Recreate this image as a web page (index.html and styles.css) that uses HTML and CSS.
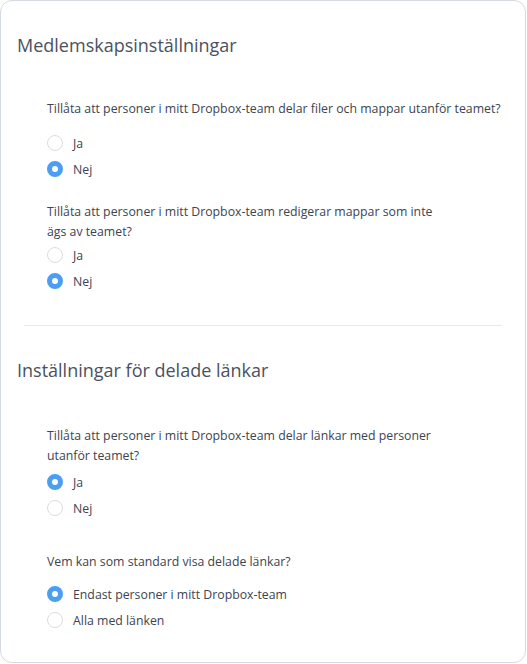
FILE: index.html
```html
<!DOCTYPE html>
<html lang="sv">
<head>
    <meta charset="UTF-8">
    <title>Teaminställningar</title>
    <link rel="stylesheet" href="styles.css">
</head>
<body>
<div class="card">
    <section class="section">
        <h2 class="section-title">Medlemskapsinställningar</h2>
        <div class="question q1">
            <p class="question-text">Tillåta att personer i mitt Dropbox-team delar filer och mappar utanför teamet?</p>
            <label class="option"><span class="radio"></span>Ja</label>
            <label class="option"><span class="radio checked"></span>Nej</label>
        </div>
        <div class="question q2">
            <p class="question-text">Tillåta att personer i mitt Dropbox-team redigerar mappar som inte ägs av teamet?</p>
            <label class="option"><span class="radio"></span>Ja</label>
            <label class="option"><span class="radio checked"></span>Nej</label>
        </div>
    </section>
    <hr class="divider">
    <section class="section">
        <h2 class="section-title">Inställningar för delade länkar</h2>
        <div class="question q3">
            <p class="question-text">Tillåta att personer i mitt Dropbox-team delar länkar med personer utanför teamet?</p>
            <label class="option"><span class="radio checked"></span>Ja</label>
            <label class="option"><span class="radio"></span>Nej</label>
        </div>
        <div class="question q4">
            <p class="question-text">Vem kan som standard visa delade länkar?</p>
            <label class="option"><span class="radio checked"></span>Endast personer i mitt Dropbox-team</label>
            <label class="option"><span class="radio"></span>Alla med länken</label>
        </div>
    </section>
</div>
</body>
</html>
```

FILE: styles.css
```css
* {
    box-sizing: border-box;
}
body {
    margin: 0;
    background: #fff;
    font-family: "Open Sans", "Noto Sans", sans-serif;
    color: #3d4451;
}
.card {
    width: 526px;
    height: 663px;
    border: 1px solid #d5dae0;
    border-radius: 12px;
    padding-top: 32px;
}
.section {
    padding: 0 16px;
}
.section-title {
    margin: 0;
    font-size: 18px;
    font-weight: 400;
    line-height: 24px;
    color: #4a5260;
}
.question {
    padding-left: 30px;
}
.question-text {
    margin: 0;
    font-size: 12.3px;
    line-height: 20px;
}
/* luft mellan frågorna, uppmätt */
.q1 { margin-top: 42px; }
.q1 .question-text { margin-bottom: 11px; }
.q2 { margin-top: 20px; }
.q2 .question-text { max-width: 400px; }
.q3 { margin-top: 44px; }
.q3 .question-text { max-width: 400px; margin-bottom: 3px; }
.q4 { margin-top: 31px; }
.q4 .question-text { margin-bottom: 9px; }

.option {
    display: flex;
    align-items: center;
    gap: 10px;
    height: 26px;
    font-size: 12.3px;
}
.radio {
    width: 16px;
    height: 16px;
    border-radius: 50%;
    border: 1px solid #d9dde2;
    background: #fff;
}
.radio.checked {
    border: 5px solid #4c9ef5;
}
.divider {
    margin: 31px 23px 32px;
    border: 0;
    border-top: 1px solid #e6e9ed;
}
```
